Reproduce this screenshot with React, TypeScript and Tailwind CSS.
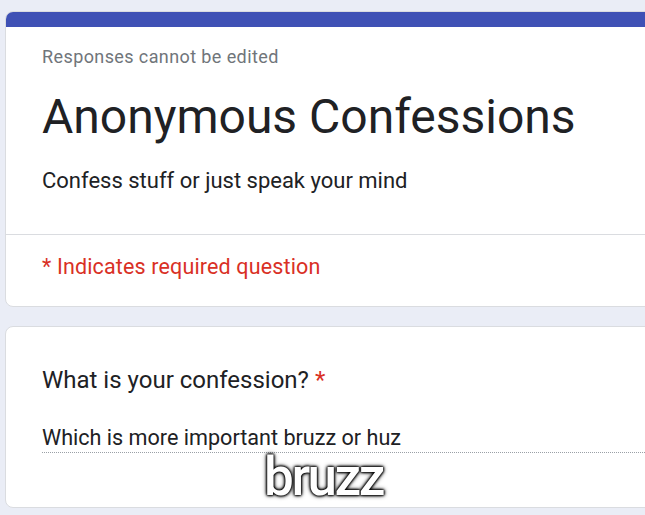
import React from "react";

export default function App() {
  const font = { fontFamily: "Roboto, 'Noto Sans', sans-serif" } as React.CSSProperties;
  return (
    <div className="relative w-[645px] h-[515px] overflow-hidden bg-[#eaedf6]" style={font}>
      <div className="flex flex-col gap-[19px] pt-[11px] pl-[5px] w-[780px]">
        <div className="rounded-[8px] border border-[#dadce0] bg-white overflow-hidden">
          <div className="h-[15px] bg-[#3f51b5]" />
          <div className="pl-[36px] pt-[18px] pb-[39px] border-b border-[#dadce0]">
            <div className="text-[18px] leading-[24px] text-[#70757a] tracking-[0.4px]">Responses cannot be edited</div>
            <div className="mt-[20px] text-[48px] leading-[56px] text-[#202124]">Anonymous Confessions</div>
            <div className="mt-[22px] text-[22px] leading-[28px] text-[#202124]">Confess stuff or just speak your mind</div>
          </div>
          <div className="pl-[36px] pt-[18px] pb-[25px] text-[21.5px] leading-[28px] text-[#d93025] tracking-[0.15px]">* Indicates required question</div>
        </div>
        <div className="rounded-[8px] border border-[#dadce0] bg-white pl-[36px] pt-[38px] pb-[54px]">
          <div className="text-[24px] leading-[30px] text-[#202124]">
            What is your confession? <span className="text-[#d93025]">*</span>
          </div>
          <div className="mt-[28px] text-[21.6px] leading-[29px] text-[#202124] border-b border-dotted border-[#9aa0a6]">
            Which is more important bruzz or huz
          </div>
        </div>
      </div>
      <div className="absolute left-0 right-0 top-[449px] flex justify-center">
        <span className="text-[53px] leading-[56px] font-medium text-white tracking-[-2.5px] [text-shadow:0_0_3px_#000,0_0_3px_#000,0_0_5px_#000,0_0_2px_#000] ml-[2px]">
          bruzz
        </span>
      </div>
    </div>
  );
}
